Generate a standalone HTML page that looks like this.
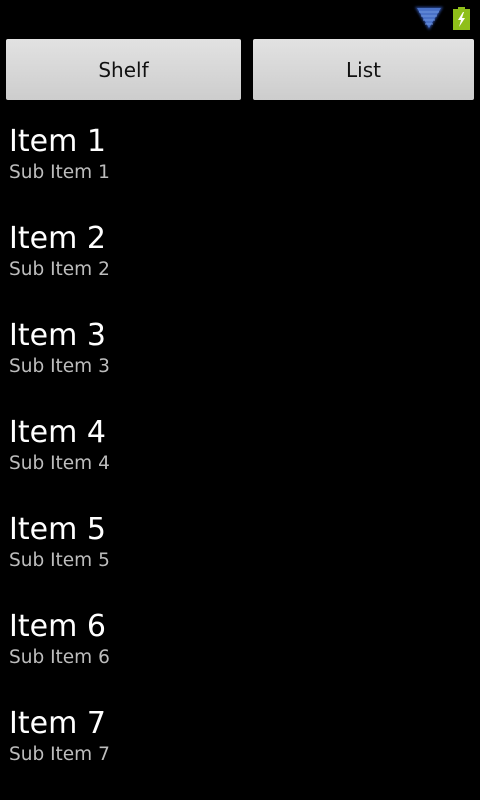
<!DOCTYPE html><html><head><style>
body{margin:0;width:480px;height:800px;background:#000;overflow:hidden;font-family:"DejaVu Sans","Liberation Sans",sans-serif;position:relative}
.btn{position:absolute;top:39px;height:61px;background:linear-gradient(#e2e2e2,#cdcdcd);border-radius:2px;color:#111;font-size:20px;display:flex;align-items:center;justify-content:center}
.it{position:absolute;left:9px;color:#fff}
.t{font-size:30px;line-height:36px}
.s{font-size:18.5px;color:#bdbdbd;line-height:24px;margin-top:1px}
</style></head><body>
<svg style="position:absolute;left:412px;top:4px" width="62" height="28">
<defs><filter id="g"><feGaussianBlur stdDeviation="1.2"/></filter></defs>
<polygon points="3,3 31,3 17,26" fill="#2a4a9a" filter="url(#g)"/>
<polygon points="5,4 29,4 17,24" fill="#4a72c8"/>
<g stroke="#6f95e0" stroke-width="1"><line x1="7" y1="8" x2="27" y2="8"/><line x1="9" y1="12" x2="25" y2="12"/><line x1="11" y1="16" x2="23" y2="16"/><line x1="13" y1="20" x2="21" y2="20"/></g>
<rect x="41" y="5" width="17" height="21" fill="#8fbf1a"/><rect x="46" y="3" width="7" height="3" fill="#8fbf1a"/>
<polygon points="51,8 46,16 49,16 47,23 53,14 50,14 52,8" fill="#fff"/>
</svg>
<div class="btn" style="left:6px;width:235px">Shelf</div>
<div class="btn" style="left:253px;width:221px">List</div>
<div class="it" style="top:124px"><div class="t">Item 1</div><div class="s">Sub Item 1</div></div>
<div class="it" style="top:221px"><div class="t">Item 2</div><div class="s">Sub Item 2</div></div>
<div class="it" style="top:318px"><div class="t">Item 3</div><div class="s">Sub Item 3</div></div>
<div class="it" style="top:415px"><div class="t">Item 4</div><div class="s">Sub Item 4</div></div>
<div class="it" style="top:512px"><div class="t">Item 5</div><div class="s">Sub Item 5</div></div>
<div class="it" style="top:609px"><div class="t">Item 6</div><div class="s">Sub Item 6</div></div>
<div class="it" style="top:706px"><div class="t">Item 7</div><div class="s">Sub Item 7</div></div>
</body></html>
